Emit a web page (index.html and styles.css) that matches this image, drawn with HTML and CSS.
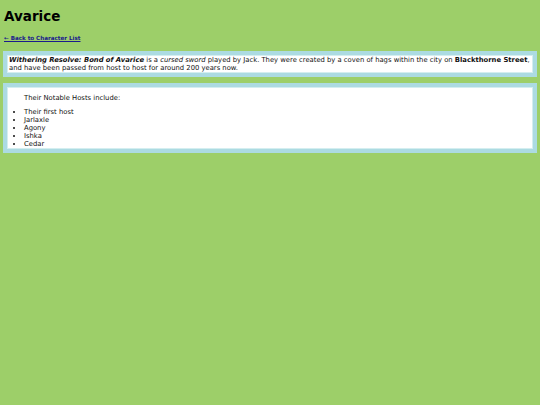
FILE: index.html
```html
<!DOCTYPE html>
<html>
<head>
<meta charset="utf-8">
<link rel="stylesheet" href="styles.css">
</head>
<body>
<h1 class="title">Avarice</h1>
<a class="back" href="#">← Back to Character List</a>
<div class="box">
  <div class="inner intro">
    <b><i>Withering Resolve: Bond of Avarice</i></b> is a <i>cursed sword</i> played by Jack. They were created by a coven of hags within the city on <b>Blackthorne Street</b>, and have been passed from host to host for around 200 years now.
  </div>
</div>
<div class="box">
  <div class="inner hosts">
    <p class="lead">Their Notable Hosts include:</p>
    <ul class="list">
      <li>Their first host</li>
      <li>Jarlaxle</li>
      <li>Agony</li>
      <li>Ishka</li>
      <li>Cedar</li>
    </ul>
  </div>
</div>
</body>
</html>
```
FILE: styles.css
```css
html, body {
  margin: 0;
  padding: 0;
}
body {
  background: #9dcf69;
  font-family: "DejaVu Sans", Verdana, sans-serif;
  font-size: 6.8px;
  line-height: 8px;
  color: #111;
  padding: 4px 3px;
}
.title {
  font-size: 13.5px;
  line-height: 17px;
  margin: 4px 1px 9px;
  color: #000;
}
.back {
  display: block;
  font-size: 5.6px;
  line-height: 8px;
  font-weight: bold;
  color: #1a1a8c;
  margin: 0 1px 9px;
}
.box {
  border: 4px solid #acdbe2;
  margin-bottom: 6px;
}
.inner {
  background: #fff;
  border: 1px solid #d4eef0;
}
.intro {
  padding: 0 1px;
}
.hosts {
  padding: 6px 0 0;
}
.lead {
  margin: 0 0 6px;
  padding-left: 16px;
}
.list {
  margin: 0;
  padding: 0 0 0 16px;
}
```
